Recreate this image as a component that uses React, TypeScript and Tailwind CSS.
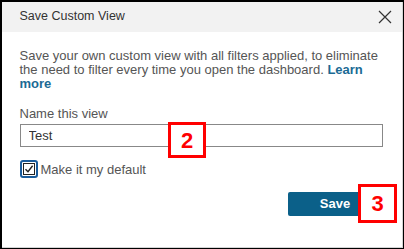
import React, { useState } from 'react';

export default function App() {
  const [name, setName] = useState('Test');
  const [isDefault, setIsDefault] = useState(true);

  return (
    <div className="relative w-[404px] h-[249px] bg-black p-[1.5px] font-['Liberation_Sans',Arial,sans-serif]">
      <div className="w-full h-full bg-white flex flex-col border-r border-b border-[#d4d4d4]">
        {/* Header */}
        <div className="h-[30px] bg-[#f2f2f2] flex items-center justify-between pl-[18px] pr-[9px]">
          <span className="text-[12.5px] text-[#333]">Save Custom View</span>
          <svg width="16" height="16" viewBox="0 0 16 16" className="text-[#333]">
            <path d="M2 2 L14 14 M14 2 L2 14" stroke="currentColor" strokeWidth="1.2" fill="none" />
          </svg>
        </div>

        {/* Body */}
        <div className="flex flex-col px-[18px] pt-[17px]">
          <p className="text-[13px] leading-[14px] text-[#555]">
            Save your own custom view with all filters applied, to eliminate the need to filter every time you open the dashboard.{' '}
            <a className="text-[#1b6a94] font-bold">Learn more</a>
          </p>

          <label className="mt-[16px] text-[13px] leading-[14px] text-[#555]">Name this view</label>
          <input
            value={name}
            onChange={(e) => setName(e.target.value)}
            className="mt-[3px] h-[23px] w-[363px] border border-[#888] px-[8px] text-[13px] text-[#333] outline-none"
          />

          <label className="mt-[13px] flex items-center gap-[3px] text-[13px] text-[#555]">
            <span className="w-[18px] h-[18px] rounded-[3px] border-2 border-[#1a5c9c] flex items-center justify-center">
              <span className="w-[12px] h-[12px] border border-[#222] bg-white flex items-center justify-center">
                {isDefault && (
                  <svg width="10" height="10" viewBox="0 0 10 10">
                    <path d="M1.5 5.2 L4 7.8 L8.6 1.8" stroke="#222" strokeWidth="1.4" fill="none" />
                  </svg>
                )}
              </span>
            </span>
            <input
              type="checkbox"
              className="hidden"
              checked={isDefault}
              onChange={() => setIsDefault(!isDefault)}
            />
            Make it my default
          </label>

          <div className="mt-[13px] flex justify-end pr-[1px]">
            <button className="w-[95px] h-[24px] rounded-[2px] bg-[#0b6089] text-white text-[13px] font-bold">
              Save
            </button>
          </div>
        </div>
      </div>

      {/* Callout markers */}
      <div className="absolute left-[168px] top-[122px] w-[38px] h-[36px] border-[3px] border-[#ff0000] bg-white flex items-center justify-center text-[#ff0000] text-[22px] font-bold">
        2
      </div>
      <div className="absolute left-[358px] top-[184px] w-[39px] h-[39px] border-[3px] border-[#ff0000] bg-white flex items-center justify-center text-[#ff0000] text-[22px] font-bold">
        3
      </div>
    </div>
  );
}
